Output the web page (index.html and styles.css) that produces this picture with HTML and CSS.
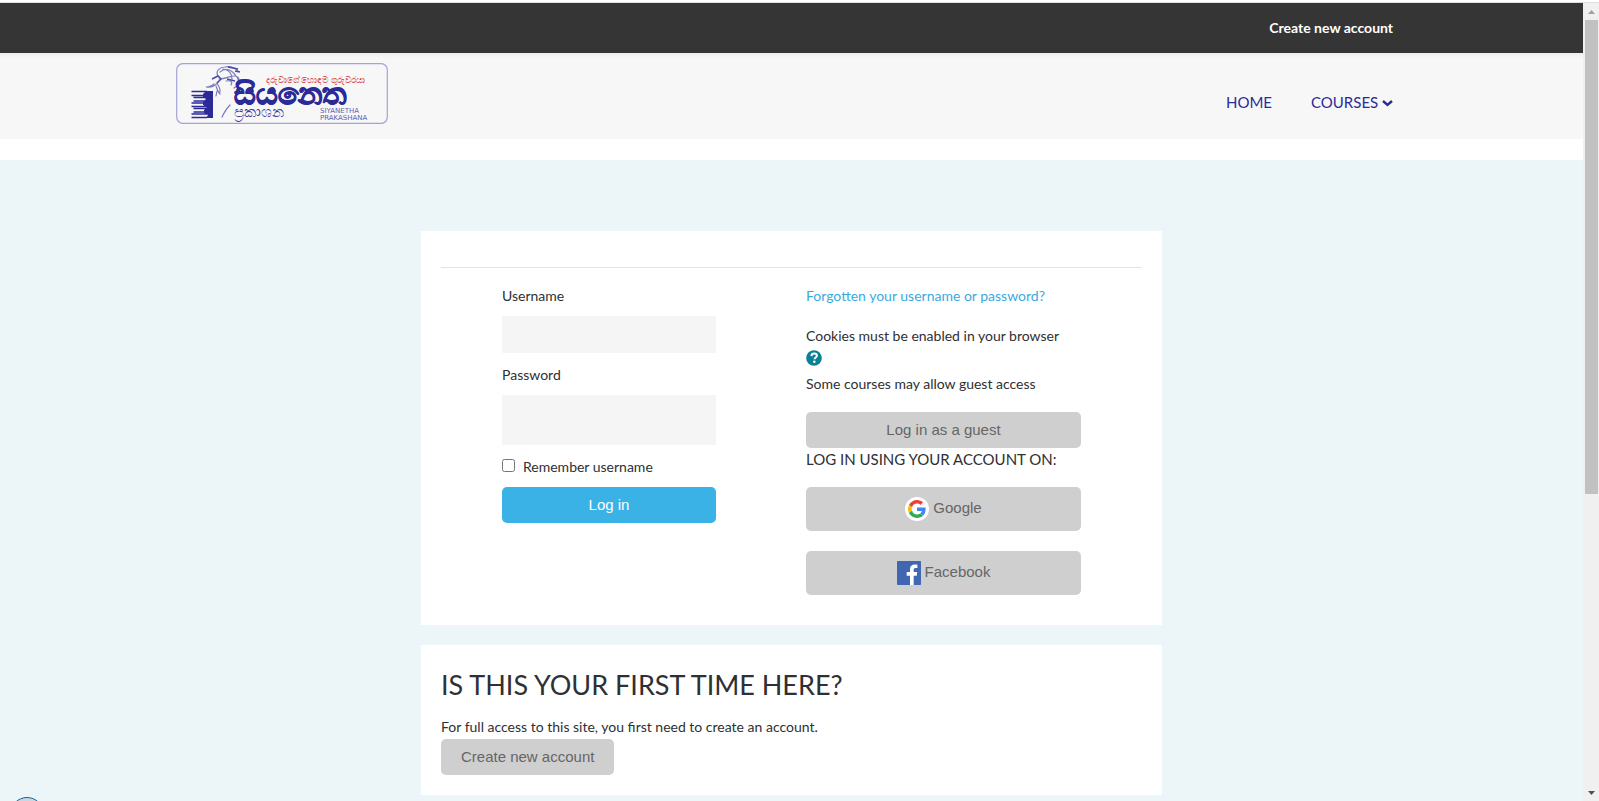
FILE: index.html
```html
<!DOCTYPE html>
<html lang="en">
<head>
<meta charset="utf-8">
<title>Log in to the site</title>
<link rel="stylesheet" href="styles.css">
</head>
<body>
<div class="window">
  <div class="page">
    <div class="topbar"><div class="container topbar-inner"><a href="#signup">Create new account</a></div></div>
    <header class="header">
      <div class="container header-inner">
        <a class="logo" href="#home" aria-label="Siyanetha Prakashana">
          <svg width="212" height="61" viewBox="0 0 212 61" fill="none">
            <rect x=".7" y=".7" width="210.600" height="59.600" rx="6" stroke="#a3a3d8" stroke-width="1.200"/>
            <path fill="#2b2b98" d="M30 28h7v27h-7l2-3-4-2v-3l3-3-4-2v-3l3-3-3-2v-3z"/>
            <path stroke="#2b2b98" stroke-width="1.500" d="M31 28.500H15.500M31 32.500H15.500M33 34.500H17.500M33 38H17.500M31 40H15.500M31 43.500H15.500M33 45.500H17.500M33 49H17.500M31 51H15.500M31 54.500H15.500"/>
            <g stroke="#7c7cc0" stroke-width="1.200" stroke-linecap="round">
              <path d="M42 13c-3-5 2-9 7-9 5-1 10 1 13 4M44 9c6-5 12-2 16 4M47 6c6 1 9 5 9 10M43 16c7 0 11-3 15-3s5 2 5 4M38 21c-2 2-5 3-8 3 5 1 9-1 12-5M41 20c1 3 4 5 3 9M40 23c1 3 2 6 4 8M61 14c2 3 1 5 2 7-1 2-3 2-5 4M50 18c5-1 7 1 5 4M54 42c-4 4-6 8-8 12M41 28l-1 5"/>
            </g>
            <path d="M36 16l6-3 3 3-4 4M52 4l10 2M51 16l8 2M59 8l5 1" stroke="#4a4aa4" stroke-width="1.500"/>
            <text class="logo-tag" x="90" y="20">දරුවාගේ හොඳම ගුරුවරයා</text>
            <text class="logo-name" x="58" y="41">සියනෙත</text>
            <text class="logo-sub" x="58" y="54">ප්‍රකාශන</text>
            <text class="logo-latin" x="144" y="50">SIYANETHA</text>
            <text class="logo-latin" x="144" y="57">PRAKASHANA</text>
          </svg>
        </a>
        <nav class="nav">
          <a href="#home">HOME</a>
          <a href="#courses">COURSES <svg width="11" height="7" viewBox="0 0 11 7" fill="none" stroke="#2b2b98" stroke-width="2.400"><path d="M1 1l4.500 4L10 1"/></svg></a>
        </nav>
      </div>
    </header>
    <main class="main">
      <section class="card">
        <hr class="rule">
        <div class="columns">
          <form class="login">
            <label for="user">Username</label>
            <input class="field" id="user" type="text">
            <label for="pass">Password</label>
            <input class="field field-tall" id="pass" type="password">
            <div class="remember"><input id="remember" type="checkbox"><label for="remember">Remember username</label></div>
            <button class="btn btn-primary" type="button">Log in</button>
          </form>
          <div class="options">
            <a class="forgot" href="#forgot">Forgotten your username or password?</a>
            <div class="cookies">Cookies must be enabled in your browser</div>
            <a class="help" href="#help" aria-label="Help with cookies">
              <svg width="16" height="16" viewBox="0 0 16 16"><circle cx="8" cy="8" r="7.800" fill="#0b7f95"/><path d="M5.400 6.100C5.500 4.500 6.500 3.600 8.100 3.600s2.800.9 2.800 2.200c0 1.700-2.400 1.700-2.400 3.400" fill="none" stroke="#fff" stroke-width="2"/><circle cx="8.300" cy="11.800" r="1.300" fill="#fff"/></svg>
            </a>
            <div class="guest">Some courses may allow guest access</div>
            <button class="btn" type="button">Log in as a guest</button>
            <h6 class="using">LOG IN USING YOUR ACCOUNT ON:</h6>
            <button class="btn btn-idp" type="button">
              <svg width="24" height="24" viewBox="0 0 24 24"><circle cx="12" cy="12" r="12" fill="#fff"/><g transform="translate(3 3) scale(.375)"><path fill="#EA4335" d="M24 9.500c3.540 0 6.710 1.220 9.210 3.600l6.850-6.850C35.900 2.380 30.470 0 24 0 14.620 0 6.510 5.380 2.560 13.220l7.980 6.190C12.430 13.720 17.740 9.500 24 9.500z"/><path fill="#4285F4" d="M46.980 24.550c0-1.570-.15-3.090-.38-4.550H24v9.020h12.940c-.58 2.960-2.260 5.480-4.780 7.180l7.730 6c4.510-4.180 7.090-10.360 7.090-17.650z"/><path fill="#FBBC05" d="M10.530 28.590c-.48-1.450-.76-2.990-.76-4.590s.27-3.140.76-4.590l-7.980-6.190C.92 16.460 0 20.120 0 24c0 3.880.92 7.540 2.560 10.780z"/><path fill="#34A853" d="M24 48c6.480 0 11.930-2.130 15.890-5.810l-7.730-6c-2.150 1.450-4.920 2.300-8.160 2.300-6.260 0-11.570-4.220-13.470-9.910l-7.980 6.190C6.510 42.620 14.620 48 24 48z"/></g></svg>
              <span>Google</span>
            </button>
            <button class="btn btn-idp" type="button">
              <svg width="24" height="24" viewBox="0 0 24 24"><rect width="24" height="24" rx=".8" fill="#4267b2"/><path fill="#fff" d="M13 24v-9.300H9.700V11H13V8.300C13 5.100 15 3.600 17.700 3.600c1.200 0 2.300.1 2.700.2V7h-1.900c-1.500 0-1.800.7-1.800 1.800V11h3.500l-.5 3.700h-3V24z"/></svg>
              <span>Facebook</span>
            </button>
          </div>
        </div>
      </section>
      <section class="card">
        <h2 class="title">IS THIS YOUR FIRST TIME HERE?</h2>
        <div class="intro">For full access to this site, you first need to create an account.</div>
        <button class="btn btn-signup" type="button">Create new account</button>
      </section>
    </main>
  </div>
  <div class="scrollbar" aria-hidden="true">
    <svg width="16" height="17" viewBox="0 0 16 17"><path fill="#a0a0a0" d="M5 11h7l-3.500-4z"/></svg>
    <div class="track"><div class="thumb"></div></div>
    <svg width="16" height="17" viewBox="0 0 16 17"><path fill="#505050" d="M5 7h7l-3.500 4z"/></svg>
  </div>
</div>
<div class="bubble"></div>
</body>
</html>
```
FILE: styles.css
```css
* { box-sizing: border-box; }
body { margin: 0; padding-top: 2px; font: 14px/24px Lato, "Noto Sans", sans-serif; color: #2e3033; background: #fff; }
a { text-decoration: none; }
.window { display: flex; height: calc(100vh - 2px); overflow: hidden; border-top: 1px solid #dedede; }
.page { flex: 1; min-width: 0; display: flex; flex-direction: column; }
.container { margin: 0 12% 0 11%; }
.topbar { background: #353535; flex: none; }
.topbar-inner { display: flex; justify-content: flex-end; padding: 13px 0; }
.topbar a { color: #fff; font-weight: 700; font-size: 14px; }
.header { background: linear-gradient(#ededed, #f7f7f7 5px); flex: none; }
.header-inner { display: flex; justify-content: space-between; align-items: flex-start; padding: 10px 0 15px; }
.logo { padding-left: 2px; }
.logo svg { display: block; }
.logo-tag { font: 9px "Noto Sans", sans-serif; fill: #d94a4f; }
.logo-name { font: 900 30px "Noto Sans", sans-serif; fill: #2b2b98; stroke: #2b2b98; stroke-width: 1px; }
.logo-sub { font: 15px "Noto Sans", sans-serif; fill: #3c3c9c; }
.logo-latin { font: 7px "DejaVu Sans", sans-serif; fill: #5f5fae; }
.nav { display: flex; gap: 39px; padding-top: 27px; }
.nav a { color: #2b2b98; font-size: 15px; }
.nav svg { vertical-align: 1px; }
.main { flex: 1; margin-top: 21px; padding-top: 71px; background: #ecf5f8; }
.card { width: 741px; max-width: 100%; margin: 0 auto 20px; padding: 20px; background: #fff; }
.rule { margin: 16px 0; border: 0; border-top: 1px solid #e3e3e3; }
.columns { display: grid; grid-template-columns: 214fr 275fr; gap: 90px; padding: 0 61px 10px; }
.login, .options { display: flex; flex-direction: column; min-width: 0; }
.field { width: 100%; height: 37px; margin: 8px 0 10px; padding: 0 12px; border: 0; background: #f5f5f5; font: inherit; }
.field-tall { height: 50px; }
.remember { display: flex; align-items: center; gap: 8px; margin-bottom: 8px; }
.remember input { width: 13px; height: 13px; margin: 0 0 3px; }
.btn { display: block; height: 36px; padding: 0 20px; border: 0; border-radius: 5px; background: #cfcfcf; color: #666; font: 15px/24px "Liberation Sans", Arial, sans-serif; }
.btn-primary { background: #3ab2e6; color: #fff; }
.forgot { color: #3aaae1; margin-bottom: 16px; }
.help { height: 24px; padding-top: 2px; }
.help svg { display: block; }
.guest { margin-bottom: 16px; }
.using { margin: 0 0 16px; font-size: 15px; line-height: 23px; font-weight: 400; }
.btn-idp { display: flex; align-items: center; justify-content: center; gap: 4px; height: 44px; }
.btn-idp span { padding-bottom: 2px; }
.btn-idp + .btn-idp { margin-top: 20px; }
.title { margin: 0 0 10px; font-size: 27px; line-height: 40px; font-weight: 400; }
.scrollbar { width: 16px; display: flex; flex-direction: column; background: #f1f0f0; }
.scrollbar svg { flex: none; }
.track { flex: 1; padding: 0 1px 0 2px; }
.thumb { height: 62%; background: #c1c1c1; }
.bubble { position: fixed; left: 10px; bottom: -30px; width: 34px; height: 34px; border: 1px solid #24618f; border-radius: 50%; background: #c4d8e6; }
```
